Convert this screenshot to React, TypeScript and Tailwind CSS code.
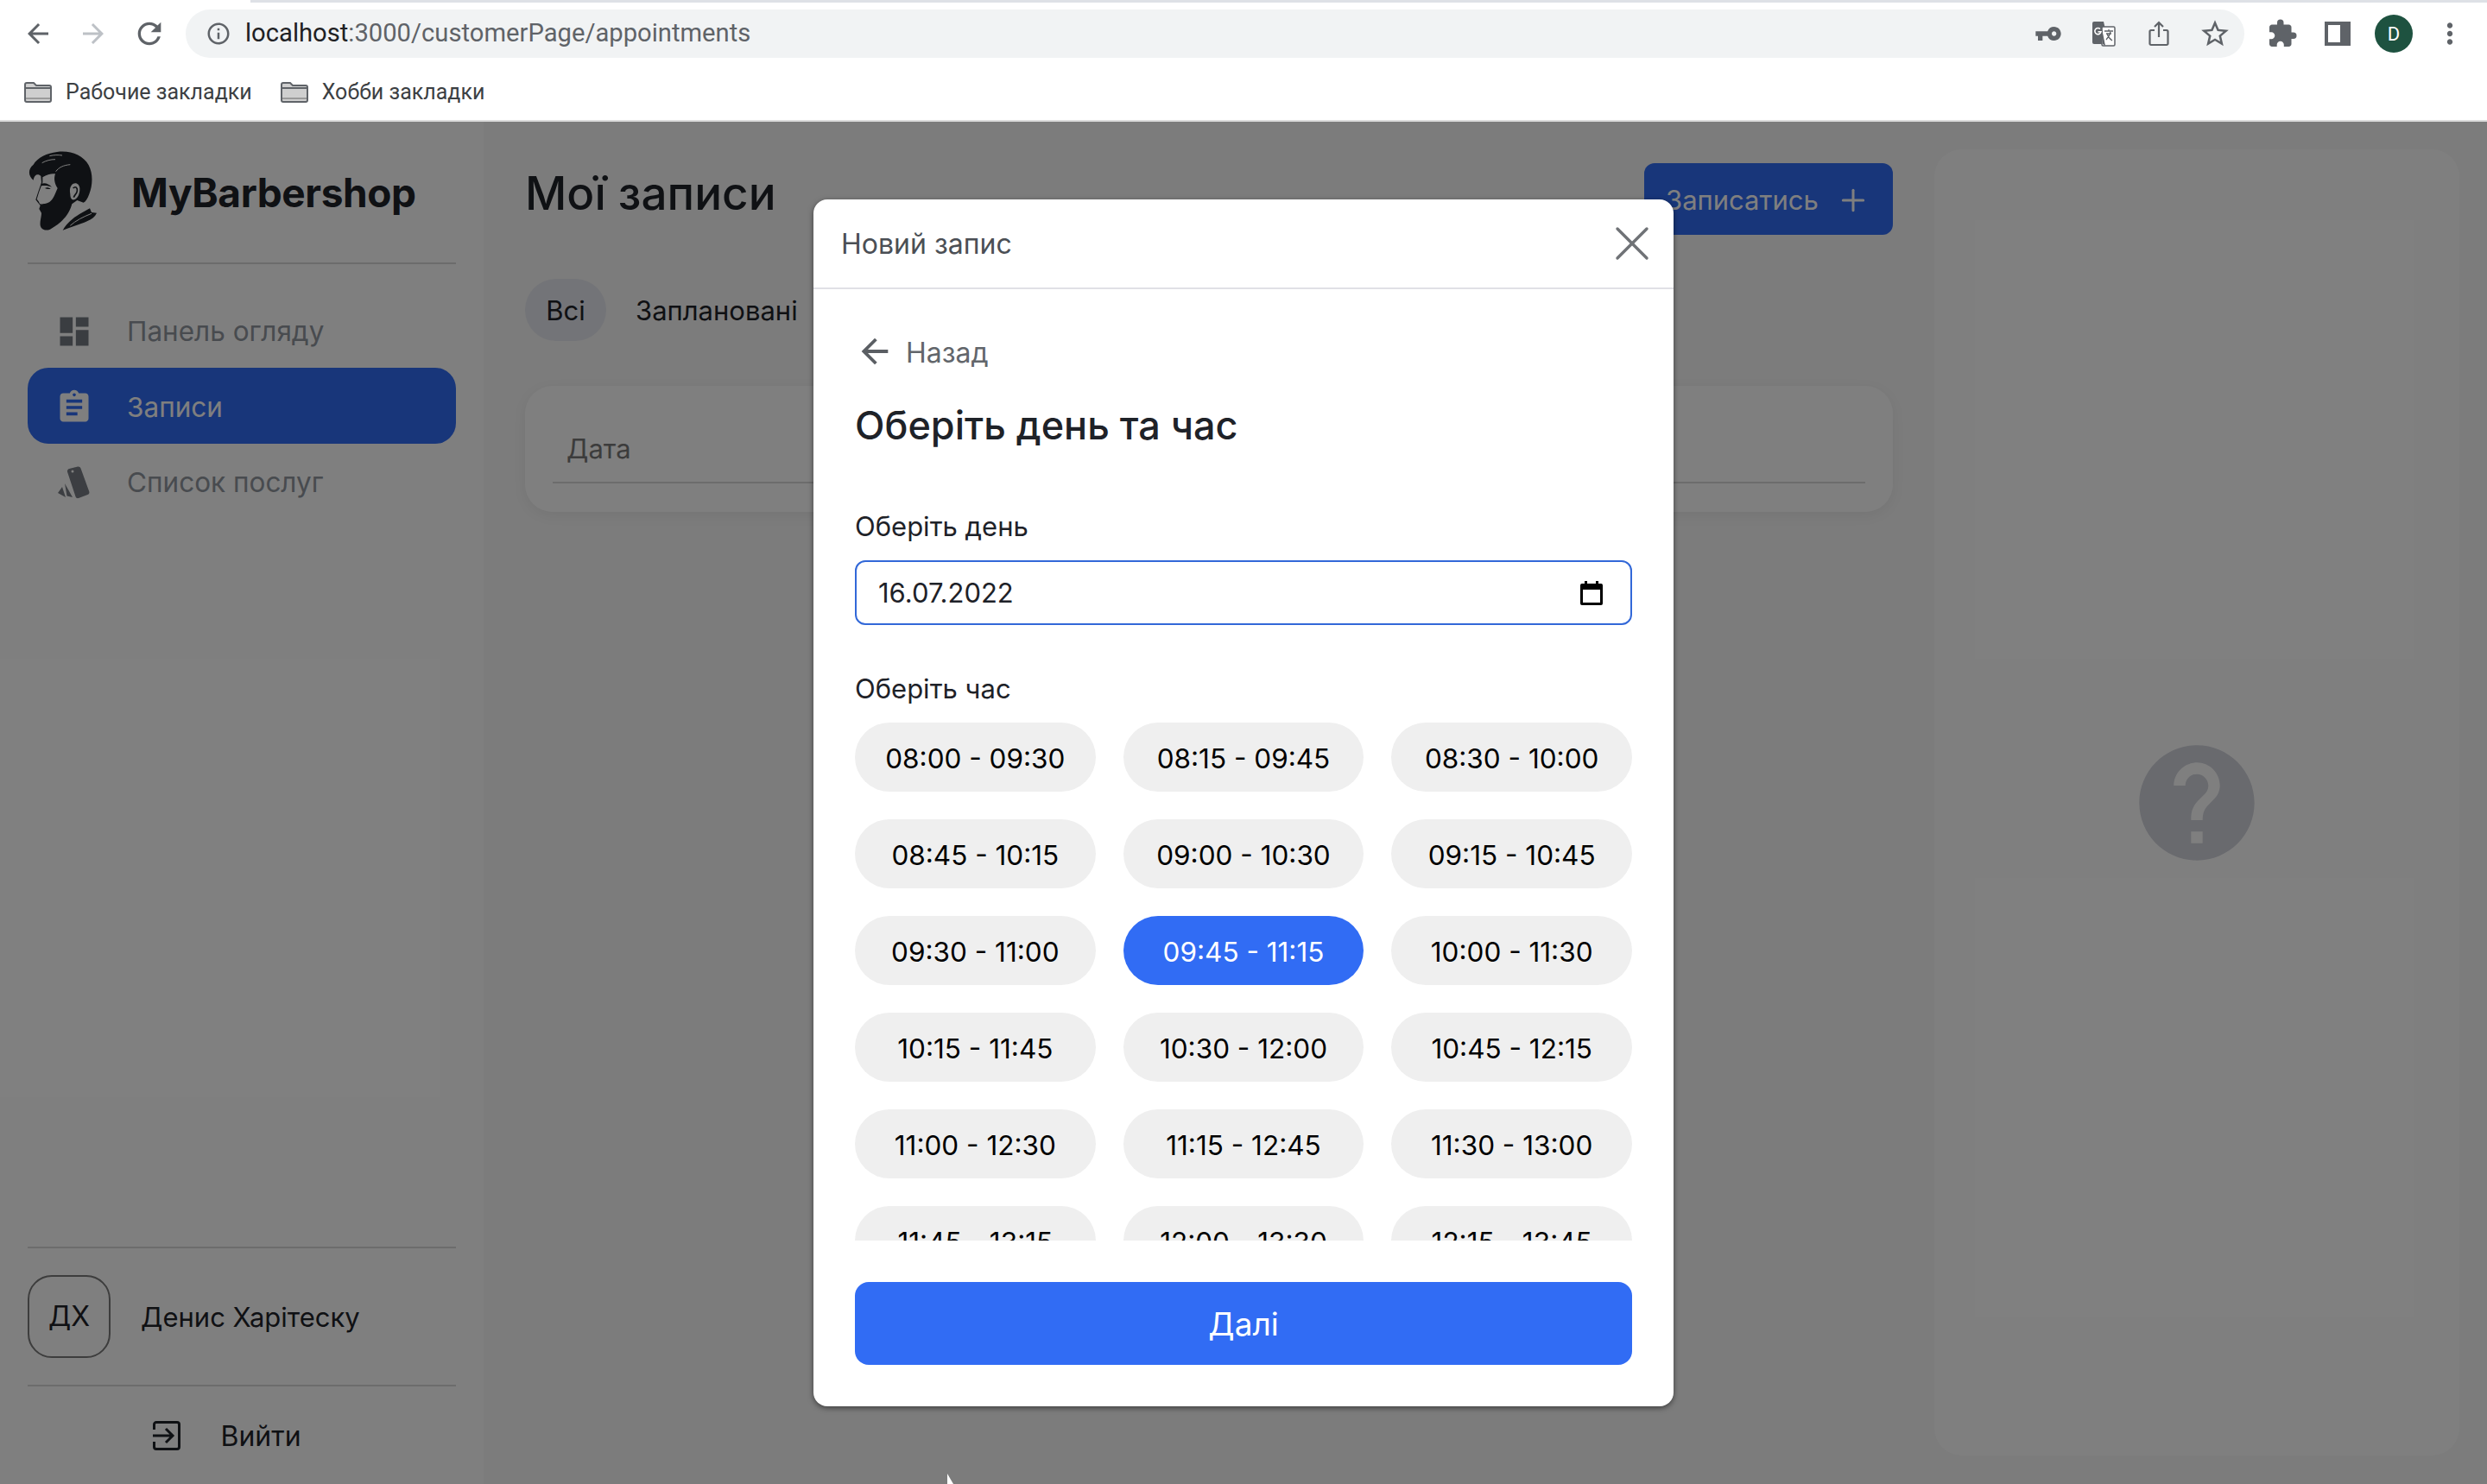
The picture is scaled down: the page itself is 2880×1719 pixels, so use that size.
import { Plus, X } from 'lucide-react';
import { MdArrowBack, MdArrowForward, MdAssignment, MdDashboard, MdExtension, MdInfoOutline, MdMoreVert, MdRefresh, MdStarBorder, MdVpnKey } from 'react-icons/md';

const slots = [
  '08:00 - 09:30', '08:15 - 09:45', '08:30 - 10:00',
  '08:45 - 10:15', '09:00 - 10:30', '09:15 - 10:45',
  '09:30 - 11:00', '09:45 - 11:15', '10:00 - 11:30',
  '10:15 - 11:45', '10:30 - 12:00', '10:45 - 12:15',
  '11:00 - 12:30', '11:15 - 12:45', '11:30 - 13:00',
  '11:45 - 13:15', '12:00 - 13:30', '12:15 - 13:45',
];

function Folder() {
  return (
    <svg width="32" height="24" viewBox="0 0 32 24" className="shrink-0">
      <path d="M1 3a2 2 0 0 1 2-2h8l3 3h15a2 2 0 0 1 2 2v15a2 2 0 0 1-2 2H3a2 2 0 0 1-2-2z" fill="#cfcfcf" stroke="#5f6368" strokeWidth="2" />
      <path d="M1 7h30" stroke="#5f6368" strokeWidth="2" />
      <path d="M2 19h28" stroke="#9a9a9a" strokeWidth="2" />
    </svg>
  );
}

function TranslateIcon() {
  return (
    <svg width="28" height="30" viewBox="0 0 28 30">
      <path d="M1 3a2 2 0 0 1 2-2h11l6 26h-17a2 2 0 0 1-2-2z" fill="#5f6368" />
      <rect x="12" y="7" width="15" height="22" rx="1.5" fill="#fff" stroke="#5f6368" strokeWidth="1.5" />
      <path d="M11 4h-1l3 23 3 2z" fill="#5f6368" />
      <path d="M10 9.5a3.6 3.6 0 1 0 1 3.2H7.5" fill="none" stroke="#fff" strokeWidth="1.6" />
      <path d="M15 12h10M20 10v2M17 15h6M22 13c-1 5-3 7-5 9M18 15c1 3 3 6 6 8" fill="none" stroke="#5f6368" strokeWidth="1.3" />
    </svg>
  );
}

function ShareIcon() {
  return (
    <svg width="24" height="30" viewBox="0 0 24 30" fill="none" stroke="#5f6368" strokeWidth="2.2">
      <path d="M7 11H3a1.5 1.5 0 0 0-1.5 1.5v14A1.5 1.5 0 0 0 3 28h18a1.5 1.5 0 0 0 1.5-1.5v-14A1.5 1.5 0 0 0 21 11h-4" />
      <path d="M12 19V2M7 7l5-5 5 5" />
    </svg>
  );
}

function PanelIcon() {
  return (
    <svg width="30" height="28" viewBox="0 0 30 28">
      <path d="M0 0h30v28H0z M4 4v20h14V4z" fill="#5f6368" fillRule="evenodd" />
    </svg>
  );
}

// coordinates follow a 3x crop of the logo
function BarberLogo() {
  return (
    <svg width="100" height="105" viewBox="0 0 300 315" className="-mx-[8px] -my-[6px] shrink-0">
      <path
        fill="#1f2328"
        d="M44 122C26 108 24 84 44 68C58 44 92 28 126 24C172 18 216 34 236 70C252 100 250 140 238 170C232 186 226 196 218 200L196 192L178 205C170 236 150 266 102 293C88 299 72 296 68 280C66 264 72 250 72 236L64 222L68 210L60 200L52 190L60 165L72 130L70 108C62 100 48 100 44 122Z"
      />
      <path fill="#fff" d="M76 112C92 102 108 98 120 100C114 118 118 134 128 150C120 168 114 188 100 198C92 204 82 202 74 208L66 204L62 196L56 188L63 165L76 130Z" />
      <path fill="#1f2328" d="M72 134C84 130 98 134 108 146C98 142 84 140 72 142ZM84 150C90 146 98 148 104 152C98 154 90 154 84 150ZM68 206L84 204L96 212L80 214Z" />
      <path fill="none" stroke="#fff" strokeWidth="3" d="M122 92C132 78 148 70 172 68M74 62C88 54 104 50 120 50M100 38C116 34 130 34 144 36" />
      <path fill="#fff" d="M176 140C188 126 204 134 205 150C206 166 200 184 186 190C176 192 172 182 172 170C170 158 170 148 176 140Z" />
      <path fill="none" stroke="#1f2328" strokeWidth="5" d="M182 150C190 142 198 148 196 160C194 170 188 172 184 182" />
      <path fill="#1f2328" d="M146 296C158 274 178 256 204 240L240 220L246 234L264 236C256 254 236 264 212 272C190 280 166 288 146 296Z" />
      <path fill="none" stroke="#fff" strokeWidth="3" d="M172 280C192 262 216 250 246 238" />
    </svg>
  );
}

function SwatchIcon() {
  return (
    <svg width="38" height="38" viewBox="0 0 38 38" fill="#787d84">
      <path d="M12 6.5c-.5-1.500.5-3 2-3.500L24 .5c1.500-.400 3 .4 3.500 2l9.800 27c.5 1.500-.3 3-1.800 3.500l-10.500 4c-1.500.5-3-.2-3.500-1.800z" />
      <path d="M9 20l9 16-6.500-1.500zM6 24l4 12-9-5z" />
      <circle cx="18" cy="6" r="1.500" fill="#fff" />
    </svg>
  );
}

function LogoutIcon() {
  return (
    <svg width="32" height="34" viewBox="0 0 32 34" fill="none" stroke="#1f2328" strokeWidth="3">
      <path d="M1.500 10V4a2.500 2.500 0 0 1 2.500-2.500h24A2.500 2.500 0 0 1 30.500 4v26a2.500 2.500 0 0 1-2.500 2.500H4A2.500 2.500 0 0 1 1.500 30v-6" />
      <path d="M0 17h22M15 9l8 8-8 8" />
    </svg>
  );
}

function CalendarIcon() {
  return (
    <svg width="26" height="28" viewBox="0 0 26 28">
      <path d="M0 5a2 2 0 0 1 2-2h3V0h3v3h10V0h3v3h3a2 2 0 0 1 2 2v21a2 2 0 0 1-2 2H2a2 2 0 0 1-2-2zM3 10v15h20V10z" fill="#000" fillRule="evenodd" />
    </svg>
  );
}

function BrowserBar() {
  return (
    <div className="h-[141px] shrink-0 border-b-2 border-[#dcdcdc] bg-white font-['Roboto',sans-serif]">
      <div className="flex h-[3px]">
        <div className="w-[290px] bg-white" />
        <div className="flex-1 bg-[#dee1e6]" />
      </div>
      <div className="mt-[8px] flex h-[56px] items-center pl-[26px]">
        <MdArrowBack size={36} className="text-[#5f6368]" />
        <MdArrowForward size={36} className="ml-[28px] text-[#bdc1c6]" />
        <MdRefresh size={40} className="ml-[27px] text-[#5f6368]" />
        <div className="ml-[22px] flex h-[56px] w-[2384px] items-center rounded-full bg-[#f1f3f4] pl-[23px]">
          <MdInfoOutline size={30} className="text-[#5f6368]" />
          <span className="ml-[16px] text-[29.2px] leading-none text-[#5f6368]">
            <span className="text-[#202124]">localhost</span>:3000/customerPage/appointments
          </span>
          <div className="ml-auto flex items-center pr-[15px]">
            <MdVpnKey size={32} className="-scale-x-100 text-[#5f6368]" />
            <div className="ml-[34px]"><TranslateIcon /></div>
            <div className="ml-[38px]"><ShareIcon /></div>
            <MdStarBorder size={38} className="ml-[34px] text-[#5f6368]" />
          </div>
        </div>
        <MdExtension size={36} className="ml-[26px] text-[#5f6368]" />
        <div className="ml-[31px]"><PanelIcon /></div>
        <div className="ml-[28px] flex h-[44px] w-[44px] items-center justify-center rounded-full bg-[#1e5240] text-[22px] text-white">D</div>
        <MdMoreVert size={38} className="ml-[24px] text-[#5f6368]" />
      </div>
      <div className="mt-[22px] flex h-[36px] items-center pl-[28px] text-[25px] text-[#3c4043]">
        <Folder />
        <span className="ml-[16px]">Рабочие закладки</span>
        <div className="ml-[33px]"><Folder /></div>
        <span className="ml-[16px]">Хобби закладки</span>
      </div>
    </div>
  );
}

function Sidebar() {
  return (
    <aside className="flex w-[560px] shrink-0 flex-col bg-white px-[32px]">
      <div className="flex h-[165px] items-center gap-[36px] border-b-2 border-[#d9d9d9] pb-[5px]">
        <BarberLogo />
        <span className="mt-[6px] text-[46px] font-bold leading-none tracking-[-0.4px] text-[#1e2228]">MyBarbershop</span>
      </div>
      <nav className="mt-[32px] flex flex-col text-[31.5px] text-[#90969e]">
        <div className="flex h-[88px] items-center pl-[32px] pt-[3px]">
          <MdDashboard size={44} className="text-[#747a82]" />
          <span className="ml-[39px]">Панель огляду</span>
        </div>
        <div className="flex h-[88px] items-center rounded-[24px] bg-[#316cf4] pl-[32px] pt-[3px] text-white">
          <MdAssignment size={44} className="text-white" />
          <span className="ml-[39px]">Записи</span>
        </div>
        <div className="flex h-[88px] items-center pl-[34px] pt-[2px]">
          <SwatchIcon />
          <span className="ml-[43px]">Список послуг</span>
        </div>
      </nav>
      <div className="mt-auto border-t-2 border-[#d9d9d9]">
        <div className="flex h-[160px] items-center border-b-2 border-[#d9d9d9] text-[#1e2228]">
          <div className="flex h-[96px] w-[96px] items-center justify-center rounded-[28px] border-2 border-[#7a7a7a] text-[32px]">ДХ</div>
          <span className="ml-[35px] mt-[3px] text-[31px]">Денис Харітеску</span>
        </div>
        <div className="flex h-[113px] items-center justify-center pr-[34px] text-[32px] text-[#1e2228]">
          <LogoutIcon />
          <span className="ml-[46px] mt-[3px]">Вийти</span>
        </div>
      </div>
    </aside>
  );
}

function MainContent() {
  return (
    <main className="flex flex-1 bg-[#f8f8f8] pl-[48px] pr-[32px] pt-[32px]">
      <div className="w-[1584px]">
        <div className="flex h-[99px] items-start justify-between">
          <h1 className="mt-[25px] text-[53px] font-medium leading-none text-[#1e2228]">Мої записи</h1>
          <button className="mt-[16px] flex h-[83px] w-[288px] items-center rounded-[12px] bg-[#316cf4] pl-[25px] pt-[3px] text-[31px] text-white">
            Записатись
            <Plus size={40} strokeWidth={1.8} className="ml-[20px]" />
          </button>
        </div>
        <div className="mt-[51px] flex h-[72px] items-center text-[31px] text-[#1e2228]">
          <div className="flex h-[72px] w-[94px] items-center justify-center rounded-[36px] bg-[#e6e8f0] pt-[3px]">Всі</div>
          <span className="ml-[34px] pt-[3px]">Заплановані</span>
        </div>
        <div className="mt-[52px] h-[146px] rounded-[32px] bg-white px-[32px] pt-[51px] shadow-[0_4px_16px_rgba(0,0,0,0.06)]">
          <div className="h-[62px] border-b-2 border-[#d9d9d9] pl-[16px] text-[31px] leading-[44px] text-[#787878]">Дата</div>
        </div>
      </div>
      <div className="mb-[33px] ml-[48px] flex flex-1 items-center justify-center rounded-[32px] bg-white">
        <svg width="160" height="160" viewBox="0 0 24 24" fill="#d2d4dc">
          <path d="M12 2C6.480 2 2 6.480 2 12s4.480 10 10 10 10-4.480 10-10S17.520 2 12 2zm1 17h-2v-2h2v2zm2.070-7.750l-.9.920C13.450 12.900 13 13.500 13 15h-2v-.5c0-1.100.45-2.100 1.170-2.830l1.240-1.260c.37-.36.59-.86.59-1.410 0-1.100-.9-2-2-2s-2 .9-2 2H8c0-2.210 1.790-4 4-4s4 1.790 4 4c0 .88-.36 1.680-.93 2.250z" />
        </svg>
      </div>
    </main>
  );
}

function BookingModal() {
  return (
    <div className="absolute left-[942px] top-[90px] h-[1398px] w-[996px] rounded-[16px] bg-white shadow-[0_2px_6px_rgba(0,0,0,0.5)]">
      <div className="flex h-[104px] items-center justify-between border-b-2 border-[#e0e0e6] pl-[32px] pr-[14px] text-[32px] text-[#4b4f55]">
        <span className="pt-[2px]">Новий запис</span>
        <X size={68} strokeWidth={1.2} className="text-[#6f7276]" />
      </div>
      <div className="px-[48px]">
        <div className="mt-[50px] flex h-[44px] items-center text-[32px] text-[#62666b]">
          <MdArrowBack size={46} className="text-[#5a5e63]" />
          <span className="ml-[13px] pt-[3px]">Назад</span>
        </div>
        <h2 className="mt-[32px] h-[64px] text-[45px] font-medium leading-[64px] text-[#1e2228]">Оберіть день та час</h2>
        <label className="mt-[63px] block h-[44px] text-[31px] leading-[44px] text-[#1e2228]">Оберіть день</label>
        <div className="mt-[17px] flex h-[75px] items-center justify-between rounded-[12px] border-2 border-[#3268d8] pl-[25px] pr-[32px] text-[31px] text-[#1e2228]">
          <span className="pt-[2px]">16.07.2022</span>
          <CalendarIcon />
        </div>
        <label className="mt-[52px] block h-[44px] text-[31px] leading-[44px] text-[#1e2228]">Оберіть час</label>
        <div className="mt-[17px] grid h-[600px] grid-cols-3 gap-x-[32px] gap-y-[32px] overflow-hidden [grid-auto-rows:80px]">
          {slots.map((slot) => (
            <div
              key={slot}
              className={
                slot === '09:45 - 11:15'
                  ? 'flex items-center justify-center rounded-[40px] bg-[#316cf4] pt-[3px] text-[31.5px] text-white'
                  : 'flex items-center justify-center rounded-[40px] bg-[#efefef] pt-[3px] text-[31.5px] text-black'
              }
            >
              {slot}
            </div>
          ))}
        </div>
        <button className="mt-[48px] flex h-[96px] w-full items-center justify-center rounded-[16px] bg-[#316cf4] pt-[2px] text-[37px] text-white">Далі</button>
      </div>
    </div>
  );
}

export default function App() {
  return (
    <div className="flex h-[1719px] w-[2880px] flex-col overflow-hidden bg-white font-['Inter',sans-serif]">
      <BrowserBar />
      <div className="relative flex flex-1">
        <Sidebar />
        <MainContent />
        <div className="absolute inset-0 bg-black/50" />
        <BookingModal />
        <svg width="8" height="12" viewBox="0 0 8 12" className="absolute left-[1097px] top-[1566px]">
          <path d="M0 0l7 12H0z" fill="#fff" />
        </svg>
      </div>
    </div>
  );
}
